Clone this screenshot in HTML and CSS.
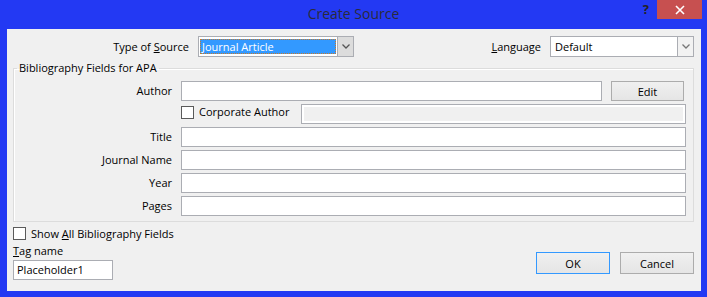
FILE: index.html
```html
<!DOCTYPE html>
<html lang="en">
<head>
  <meta charset="UTF-8" />
  <title>Create Source</title>
  <link rel="stylesheet" href="styles.css">
</head>
<body>
  <div class="titlebar">
    <span class="title">Create Source</span>
    <div class="controls">
      <span class="help">?</span>
      <span class="close">
        <svg viewBox="0 0 10 10" width="10" height="10"><path d="M1 1L9 9M9 1L1 9" stroke="#fff" stroke-width="1.6"/></svg>
      </span>
    </div>
  </div>

  <div class="client">
    <div class="top-row">
      <label class="top-label type-label">Type of <u>S</u>ource</label>
      <div class="combo type-combo">
        <span class="combo-value"><span class="selected">Journal Article</span></span>
        <span class="combo-btn dark">
          <svg viewBox="0 0 8 5" width="8" height="5"><path d="M0.5 0.5L4 4L7.5 0.5" fill="none" stroke="#555" stroke-width="1.3"/></svg>
        </span>
      </div>
      <label class="top-label lang-label"><u>L</u>anguage</label>
      <div class="combo lang-combo">
        <span class="combo-value">Default</span>
        <span class="combo-btn">
          <svg viewBox="0 0 8 5" width="8" height="5"><path d="M0.5 0.5L4 4L7.5 0.5" fill="none" stroke="#777" stroke-width="1.3"/></svg>
        </span>
      </div>
    </div>

    <fieldset class="fields">
      <legend>Bibliography Fields for APA</legend>
      <div class="field-grid">
        <span class="field-label">Author</span>
        <div class="author-cell">
          <span class="textbox grow"></span>
          <button class="btn edit">Edit</button>
        </div>

        <span></span>
        <div class="corp-cell">
          <span class="check corp-check"></span>
          <span class="corp-text">Corporate Author</span>
          <span class="textbox disabled grow"></span>
        </div>

        <span class="field-label">Title</span>
        <span class="textbox"></span>

        <span class="field-label">Journal Name</span>
        <span class="textbox"></span>

        <span class="field-label">Year</span>
        <span class="textbox"></span>

        <span class="field-label">Pages</span>
        <span class="textbox"></span>
      </div>
    </fieldset>

    <div class="bottom">
      <div class="bottom-left">
        <div class="check-row"><span class="check"></span><span>Show <u>A</u>ll Bibliography Fields</span></div>
        <div class="tag-label"><u>T</u>ag name</div>
        <div class="textbox tag-box">Placeholder1</div>
      </div>
      <div class="buttons">
        <button class="btn ok">OK</button>
        <button class="btn cancel">Cancel</button>
      </div>
    </div>
  </div>
</body>
</html>
```

FILE: styles.css
```css
* {
  box-sizing: border-box;
  margin: 0;
  padding: 0;
}
body {
  background: #2339f3;
  width: 707px;
  height: 297px;
  font-family: 'Open Sans', sans-serif;
  font-size: 11px;
  color: #000;
  overflow: hidden;
}
u {
  text-decoration: underline;
  text-underline-offset: 1px;
}

/* title bar */
.titlebar {
  position: relative;
  height: 29px;
  text-align: center;
}
.title {
  line-height: 28px;
  font-size: 14px;
  color: #2b2b3a;
}
.controls {
  position: absolute;
  top: 0;
  right: 5px;
  display: flex;
  align-items: flex-start;
}
.help {
  font-weight: bold;
  font-size: 13px;
  line-height: 19px;
  color: #222;
  margin-right: 8px;
}
.close {
  width: 45px;
  height: 19px;
  background: #c75050;
  display: flex;
  align-items: center;
  justify-content: center;
}

/* client area */
.client {
  margin: 0 6px 0 7px;
  height: 262px;
  background: #f0f0f0;
}

.top-row {
  display: flex;
  align-items: center;
  padding-top: 7px;
  height: 28px;
}
.top-label {
  text-align: right;
  margin-right: 9px;
}
.type-label { width: 182px; flex: none; }
.lang-label { margin-left: auto; }
.combo {
  display: flex;
  height: 21px;
  background: #fff;
  border: 1px solid #abadb3;
  flex: none;
}
.type-combo { width: 156px; }
.lang-combo { width: 144px; margin-right: 7px; }
.combo-value {
  flex: 1;
  display: flex;
  align-items: center;
  padding-left: 1px;
}
.lang-combo .combo-value { padding-left: 4px; }
.selected {
  display: block;
  width: 100%;
  margin-right: 1px;
  padding-left: 2px;
  line-height: 15px;
  background: #3399ff;
  color: #fff;
  outline: 1px dotted #c87a2a;
  outline-offset: -1px;
}
.combo-btn {
  width: 16px;
  display: flex;
  align-items: center;
  justify-content: center;
  border-left: 1px solid #abadb3;
  background: #f2f2f2;
}
.combo-btn.dark { background: #dcdcdc; }

/* bibliography group */
.fields {
  margin: 3px 7px 0 6px;
  border: 1px solid #dcdcdc;
  box-shadow: inset 1px 1px 0 #fff;
  padding: 0;
}
.fields legend {
  margin-left: 3px;
  padding: 0 2px;
  line-height: 16px;
}
.field-grid {
  display: grid;
  grid-template-columns: 158px 1fr;
  column-gap: 9px;
  row-gap: 3px;
  padding: 5px 7px 5px 0;
}
.field-label {
  text-align: right;
  line-height: 20px;
}
.textbox {
  display: block;
  height: 20px;
  background: #fff;
  border: 1px solid #abadb3;
}
.grow { flex: 1; }
.textbox.disabled {
  background: #f0f0f0;
  box-shadow: inset 0 0 0 2px #fff;
}
.author-cell {
  display: flex;
  align-items: center;
}
.corp-cell {
  display: flex;
  align-items: flex-start;
  height: 20px;
}
.edit {
  width: 73px;
  margin-left: 9px;
  margin-right: 2px;
}
.check {
  width: 13px;
  height: 13px;
  background: #fff;
  border: 1px solid #5a5a5a;
  flex: none;
}
.corp-check { margin-top: 2px; }
.corp-text {
  margin-left: 5px;
  width: 102px;
  line-height: 16px;
}

/* buttons */
.btn {
  height: 20px;
  font-family: inherit;
  font-size: 11px;
  color: #000;
  background: linear-gradient(#f0f0f0, #e5e5e5);
  border: 1px solid #acacac;
}

/* bottom */
.bottom {
  display: flex;
  align-items: flex-end;
  justify-content: space-between;
  padding: 0 7px 0 6px;
}
.bottom-left {
  padding-top: 3px;
}
.check-row {
  display: flex;
  align-items: center;
  gap: 5px;
  height: 16px;
}
.tag-label {
  margin-top: 2px;
  line-height: 16px;
}
.tag-box {
  width: 100px;
  margin-top: 1px;
  padding-left: 3px;
  line-height: 18px;
}
.buttons {
  display: flex;
  gap: 10px;
  margin-bottom: 6px;
}
.buttons .btn {
  width: 74px;
  height: 22px;
}
.btn.ok { border-color: #3399ff; }
```
